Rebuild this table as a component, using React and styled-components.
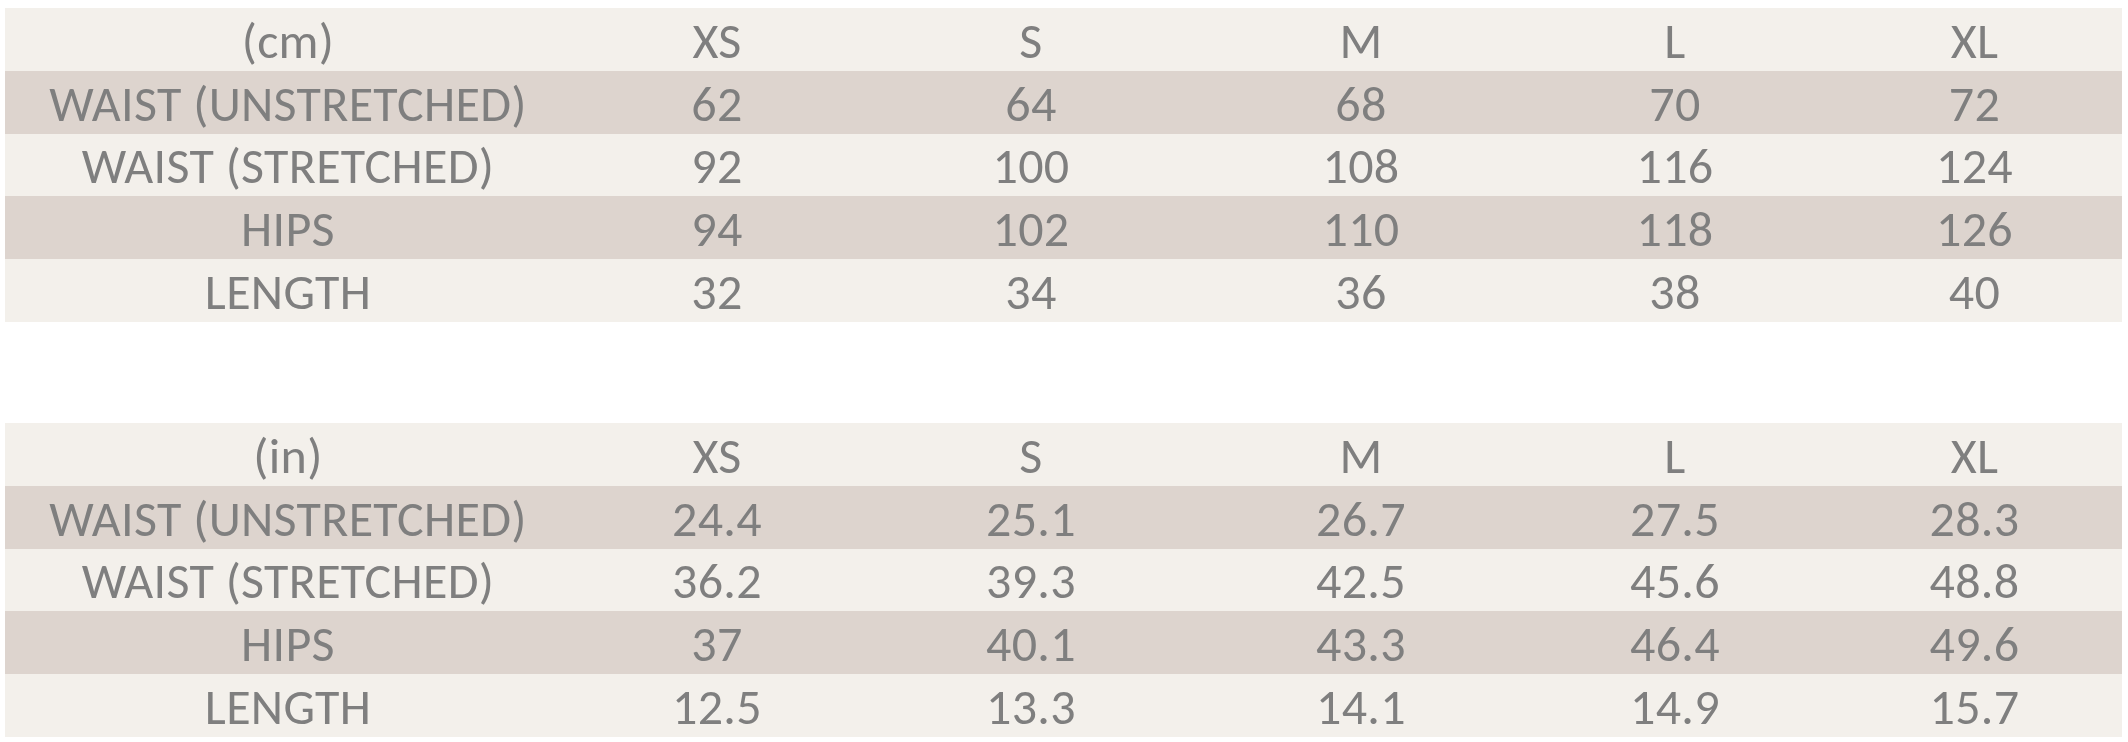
import React from "react";
import styled, { createGlobalStyle } from "styled-components";

const Global = createGlobalStyle`
  html, body { margin: 0; padding: 0; background: #ffffff; }
  body { font-family: Carlito, Lato, "Open Sans", sans-serif; }
`;

const Page = styled.div`
  display: flex;
  flex-direction: column;
  gap: 101px;
  padding: 8px 6px 0 5px;
`;

const Table = styled.div`
  display: grid;
  grid-template-columns: 566px 292px 336px 324px 304px 295px;
  grid-auto-rows: 62.8px;
`;

const Row = styled.div`
  display: contents;
  & > div {
    background: ${(p) => (p.$shade ? "#ddd4ce" : "#f3f0eb")};
  }
`;

const Cell = styled.div`
  display: flex;
  align-items: center;
  justify-content: center;
  padding-top: 3px;
  color: #7f7f7f;
  font-size: 50px;
  letter-spacing: 0.3px;
  line-height: 1;
  white-space: nowrap;
`;

const sizes = ["XS", "S", "M", "L", "XL"];

const tables = [
  {
    unit: "(cm)",
    rows: [
      ["WAIST (UNSTRETCHED)", ["62", "64", "68", "70", "72"]],
      ["WAIST (STRETCHED)", ["92", "100", "108", "116", "124"]],
      ["HIPS", ["94", "102", "110", "118", "126"]],
      ["LENGTH", ["32", "34", "36", "38", "40"]],
    ],
  },
  {
    unit: "(in)",
    rows: [
      ["WAIST (UNSTRETCHED)", ["24.4", "25.1", "26.7", "27.5", "28.3"]],
      ["WAIST (STRETCHED)", ["36.2", "39.3", "42.5", "45.6", "48.8"]],
      ["HIPS", ["37", "40.1", "43.3", "46.4", "49.6"]],
      ["LENGTH", ["12.5", "13.3", "14.1", "14.9", "15.7"]],
    ],
  },
];

function SizeTable({ unit, rows }) {
  return (
    <Table>
      <Row>
        <Cell>{unit}</Cell>
        {sizes.map((s) => (
          <Cell key={s}>{s}</Cell>
        ))}
      </Row>
      {rows.map(([label, vals], i) => (
        <Row key={label} $shade={i % 2 === 0}>
          <Cell>{label}</Cell>
          {vals.map((v, j) => (
            <Cell key={j}>{v}</Cell>
          ))}
        </Row>
      ))}
    </Table>
  );
}

export default function App() {
  return (
    <>
      <Global />
      <Page>
        {tables.map((t) => (
          <SizeTable key={t.unit} {...t} />
        ))}
      </Page>
    </>
  );
}
